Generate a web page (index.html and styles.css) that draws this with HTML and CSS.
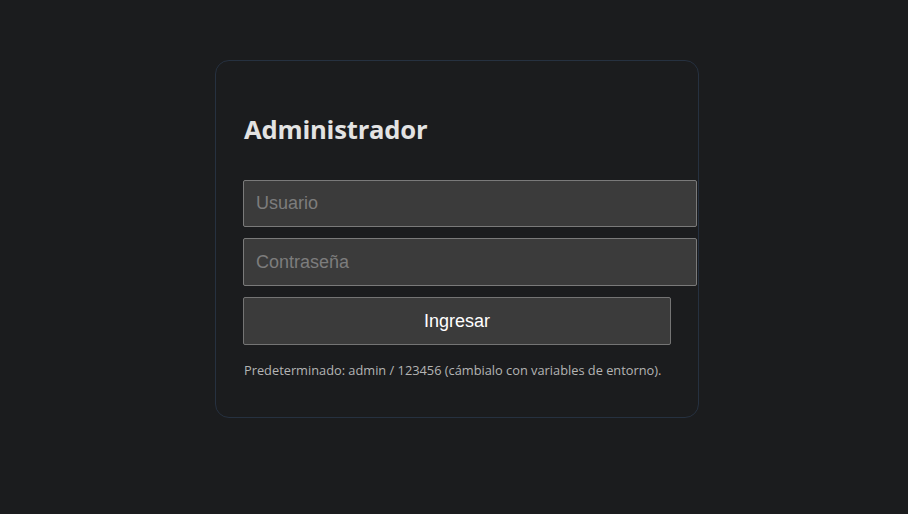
FILE: index.html
```html
<!DOCTYPE html>
<html lang="es">
<head>
<meta charset="utf-8">
<title>Administrador</title>
<link rel="stylesheet" href="styles.css">
</head>
<body>
<main class="page">
  <form class="card">
    <h1 class="title">Administrador</h1>
    <input class="field" type="text" placeholder="Usuario">
    <input class="field" type="password" placeholder="Contraseña">
    <button class="btn" type="button">Ingresar</button>
    <p class="hint">Predeterminado: admin / 123456 (cámbialo con variables de entorno).</p>
  </form>
</main>
</body>
</html>
```
FILE: styles.css
```css
html, body {
  margin: 0;
  height: 100%;
  background: #1b1c1e;
}
.page {
  display: flex;
  justify-content: center;
  padding: 60px 0 0 6px;
}
.card {
  width: 428px;
  padding: 27px 27px 36px;
  border: 1px solid #263140;
  border-radius: 14px;
  background: #1b1c1e;
  display: flex;
  flex-direction: column;
  align-items: flex-start;
  font-family: "Open Sans", "Noto Sans", sans-serif;
}
.title {
  margin: 25px 0 33px 1px;
  font-size: 25.6px;
  line-height: 34px;
  font-weight: 700;
  color: #e3e3e3;
  letter-spacing: -0.2px;
}
.field {
  box-sizing: content-box;
  width: 100%;
  height: 45px;
  margin: 0 0 11px;
  padding: 0 12px;
  border: 1px solid #7a7a7a;
  border-radius: 2px;
  background: #3b3b3b;
  color: #ddd;
  font-family: "Liberation Sans", Arial, sans-serif;
  font-size: 18px;
  outline: none;
}
.field + .field {
  height: 46px;
}
.btn {
  width: 100%;
  height: 48px;
  border: 1px solid #747474;
  border-radius: 2px;
  background: #3b3b3b;
  color: #fff;
  font-family: "Liberation Sans", Arial, sans-serif;
  font-size: 18px;
}
.field::placeholder {
  color: #7d7d7d;
}
.hint {
  margin: 16px 0 2px 1px;
  font-size: 12.8px;
  line-height: 18px;
  color: #b4b4b4;
}
```
